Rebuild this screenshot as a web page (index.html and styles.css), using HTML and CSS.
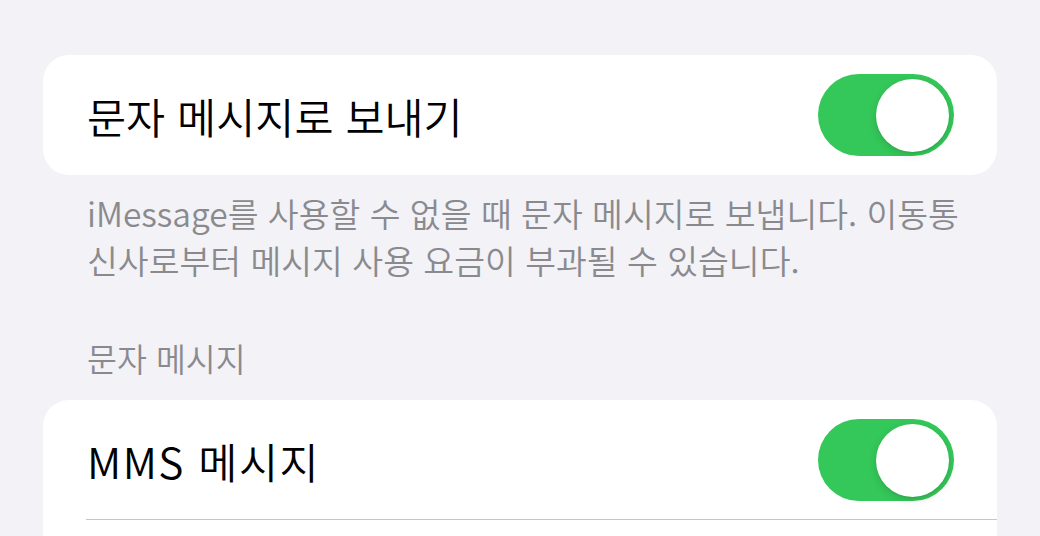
FILE: index.html
```html
<!DOCTYPE html>
<html lang="ko">
<head>
<meta charset="utf-8">
<link rel="stylesheet" href="styles.css">
</head>
<body>
<div class="page">
  <div class="card">
    <div class="row">
      <span class="label">문자 메시지로 보내기</span>
      <div class="toggle on"><div class="knob"></div></div>
    </div>
  </div>
  <p class="footer">iMessage를 사용할 수 없을 때 문자 메시지로 보냅니다. 이동통<br>신사로부터 메시지 사용 요금이 부과될 수 있습니다.</p>
  <div class="header">문자 메시지</div>
  <div class="card">
    <div class="row sep">
      <span class="label mms">MMS 메시지</span>
      <div class="toggle on"><div class="knob"></div></div>
    </div>
    <div class="row spacer"></div>
  </div>
</div>
</body>
</html>
```
FILE: styles.css
```css
html, body {
  margin: 0;
  padding: 0;
  background: #f2f2f7;
  height: 536px;
  overflow: hidden;
  font-family: "Noto Sans CJK KR", "Noto Sans", sans-serif;
}
.page {
  padding: 55px 43px 0 43px;
}
.card {
  background: #ffffff;
  border-radius: 26px;
  overflow: hidden;
}
.row {
  height: 120px;
  display: flex;
  align-items: center;
  justify-content: space-between;
  padding: 0 43px 0 44px;
  position: relative;
}
.row.spacer {
  height: 40px;
}
.row.sep::after {
  content: "";
  position: absolute;
  left: 43px;
  right: 0;
  bottom: 0;
  height: 1px;
  background: #c6c6c8;
}
.label {
  font-size: 42.5px;
  color: #000;
  letter-spacing: 0;
  font-weight: 350;
}
.label.mms {
  letter-spacing: 1.5px;
}
.toggle {
  width: 136px;
  height: 82px;
  border-radius: 41px;
  background: #34c759;
  display: flex;
  align-items: center;
  justify-content: flex-end;
  padding: 0 5px;
  box-sizing: border-box;
}
.knob {
  width: 73px;
  height: 73px;
  border-radius: 50%;
  background: #fff;
  box-shadow: 0 3px 8px rgba(0,0,0,0.12), 0 1px 2px rgba(0,0,0,0.08);
}
.footer {
  margin: 0;
  padding: 14px 0 0 44px;
  font-size: 33.5px;
  line-height: 47px;
  color: #8a8a8e;
  letter-spacing: 0;
  font-weight: 350;
}
.header {
  padding: 51px 0 0 44px;
  height: 66px;
  box-sizing: content-box;
  font-size: 32.5px;
  line-height: 47px;
  color: #8a8a8e;
  font-weight: 350;
}
```
